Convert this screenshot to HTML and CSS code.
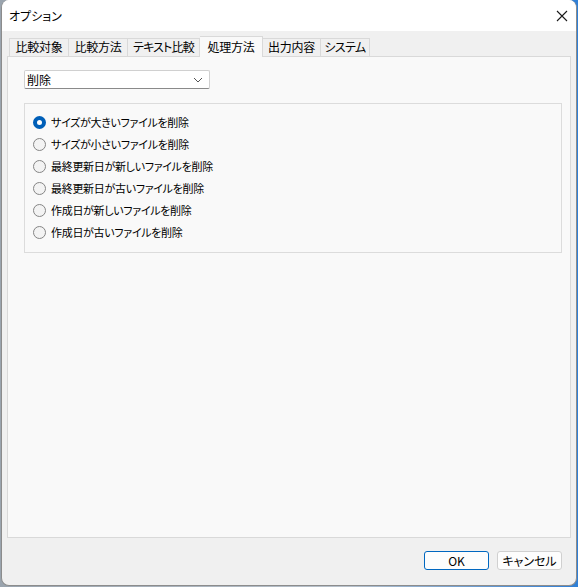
FILE: index.html
```html
<!DOCTYPE html>
<html lang="ja">
<head>
<meta charset="utf-8">
<link rel="stylesheet" href="styles.css">
</head>
<body>
<div class="window">
  <div class="titlebar">
    <span class="title">オプション</span>
    <svg class="close" width="12" height="12" viewBox="0 0 12 12"><path d="M1 1L11 11M11 1L1 11" stroke="#1a1a1a" stroke-width="1.1" fill="none"/></svg>
  </div>
  <div class="content">
    <div class="tabs">
      <div class="tab first">比較対象</div>
      <div class="tab">比較方法</div>
      <div class="tab">テキスト比較</div>
      <div class="tab active">処理方法</div>
      <div class="tab">出力内容</div>
      <div class="tab">システム</div>
    </div>
    <div class="panel">
      <div class="combo">
        <span>削除</span>
        <svg class="chev" width="10" height="6" viewBox="0 0 10 6"><path d="M1 1L5 5L9 1" stroke="#555" stroke-width="1" fill="none"/></svg>
      </div>
      <div class="group">
        <label class="radio"><span class="dot on"></span>サイズが大きいファイルを削除</label>
        <label class="radio"><span class="dot"></span>サイズが小さいファイルを削除</label>
        <label class="radio"><span class="dot"></span>最終更新日が新しいファイルを削除</label>
        <label class="radio"><span class="dot"></span>最終更新日が古いファイルを削除</label>
        <label class="radio"><span class="dot"></span>作成日が新しいファイルを削除</label>
        <label class="radio"><span class="dot"></span>作成日が古いファイルを削除</label>
      </div>
    </div>
    <div class="buttons">
      <div class="btn default">OK</div>
      <div class="btn">キャンセル</div>
    </div>
  </div>
</div>
</body>
</html>
```

FILE: styles.css
```css
* { box-sizing: border-box; }
html, body { margin: 0; padding: 0; }
body {
  width: 578px;
  height: 587px;
  background: linear-gradient(90deg, #9aa4ae 0%, #b8c2cc 60%, #2f7fd6 100%);
  font-family: "Noto Sans CJK JP", "Noto Sans", sans-serif;
  font-size: 12px;
  font-feature-settings: "palt";
  color: #000;
  overflow: hidden;
}
.window {
  margin-left: 1px;
  width: 576px;
  height: 586px;
  background: #f0f0f0;
  border: 1px solid #8c8c8c;
  border-top: none;
  border-radius: 8px;
  overflow: hidden;
  display: flex;
  flex-direction: column;
}
.titlebar {
  height: 31px;
  background: #ffffff;
  display: flex;
  align-items: center;
  justify-content: space-between;
  padding: 0 8px 0 7px;
  flex: none;
}
.title { font-size: 12px; line-height: 14px; }
.content {
  flex: 1;
  display: flex;
  flex-direction: column;
  padding: 5px 5px 0 5px;
}
.tabs {
  display: flex;
  align-items: flex-end;
  height: 20px;
  padding-left: 2px;
  position: relative;
  z-index: 1;
}
.tab {
  height: 18px;
  border: 1px solid #d9d9d9;
  border-bottom: none;
  border-left: none;
  background: #f0f0f0;
  line-height: 16px;
  white-space: nowrap;
  text-align: center;
  letter-spacing: -0.3px;
}
.tab.first { border-left: 1px solid #d9d9d9; }
.tab:nth-child(1) { width: 60px; }
.tab:nth-child(2) { width: 59px; }
.tab:nth-child(3) { width: 72px; letter-spacing: -0.8px; }
.tab:nth-child(5) { width: 58px; }
.tab:nth-child(6) { width: 49px; letter-spacing: -0.6px; }
.tab.active {
  width: 63px;
  height: 21px;
  margin-bottom: -1px;
  background: #f9f9f9;
  line-height: 19px;
}
.panel {
  width: 564px;
  height: 482px;
  background: #f9f9f9;
  border: 1px solid #d9d9d9;
  padding: 13px 0 0 16px;
}
.combo {
  width: 186px;
  height: 19px;
  background: #fff;
  border: 1px solid #d0d0d0;
  border-bottom-color: #8a8a8a;
  border-radius: 2px;
  display: flex;
  align-items: center;
  justify-content: space-between;
  padding: 0 6px 0 2px;
  line-height: 16px;
}
.chev { margin-top: 1px; }
.group {
  margin-top: 14px;
  width: 538px;
  height: 150px;
  border: 1px solid #dcdcdc;
  padding: 7px 0 0 8px;
}
.radio {
  display: flex;
  align-items: center;
  height: 22px;
  gap: 5px;
  line-height: 16px;
  font-size: 11px;
  letter-spacing: -0.3px;
}
.dot {
  width: 13px;
  height: 13px;
  border-radius: 50%;
  border: 1px solid #858585;
  background: #f3f3f3;
  flex: none;
}
.dot.on {
  border: 4px solid #005fb8;
  background: #ffffff;
}
.buttons {
  display: flex;
  justify-content: flex-end;
  gap: 8px;
  padding: 13px 9px 0 0;
}
.btn {
  width: 65px;
  height: 19px;
  border: 1px solid #d0d0d0;
  border-radius: 3px;
  background: #fdfdfd;
  text-align: center;
  line-height: 17px;
}
.btn.default { border-color: #0067c0; }
```
